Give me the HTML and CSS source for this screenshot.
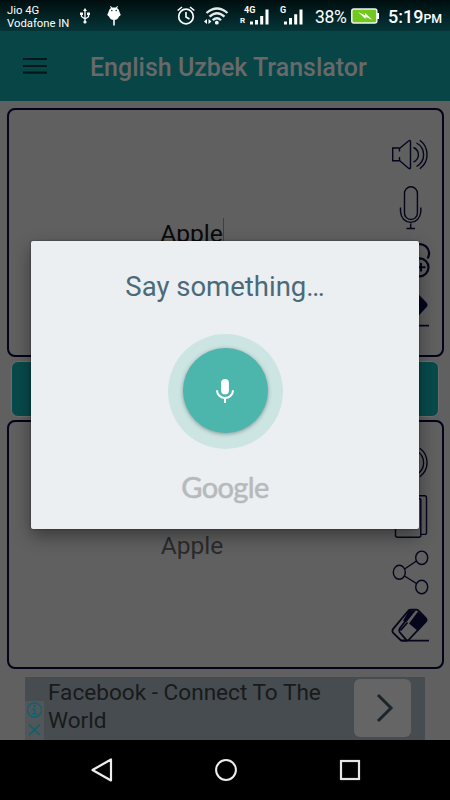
FILE: index.html
```
<!DOCTYPE html>
<html lang="en">
<head>
    <meta charset="UTF-8">
    <meta name="viewport" content="width=device-width, initial-scale=1.0">
    <title>English Uzbek Translator</title>
    <link rel="stylesheet" href="styles.css">
</head>
<body>

<!-- shared icons -->
<svg class="icon-defs" width="0" height="0">
    <symbol id="icon-speaker" viewBox="0 0 40 44">
        <path d="M8.500 15H1.700v12.700h6.800M8.500 14.500v4M8.500 24v4M8.500 15.500 17.500 8q2-1.200 2 .6v26q0 1.800-2 .6L8.500 27.500M22.500 14.500a8.500 8 0 0 1 0 14.500M25.500 10a14 13.500 0 0 1 0 23.500M28.800 7.200a18.500 18 0 0 1 0 28.600"/>
    </symbol>
    <symbol id="icon-eraser" viewBox="0 0 40 44">
        <path d="M17.500 7.500 2.200 25.800Q.7 28 2.200 29.800L9.500 37Q10.300 37.700 11.500 37.700H15.500Q17 37.700 18 36.500L34.800 18.700Q36.300 17 34.800 15.200L27.500 7.700Q26.500 6.700 25 6.700H20Q18.500 6.700 17.500 7.500Z" stroke-width="1.800"/>
        <path class="solid" d="M18 7.200h7L15.500 19l-3.500-1.300zM27 8.500l8.300 7.700v2.500L27 28l-9-7.500z"/>
        <path d="M14.500 18 8.700 25.500q-1.300 2 0 3.800l7 8M16.500 19.500l-7 8M10.500 37.700H38" stroke-width="1.800"/>
    </symbol>
</svg>

<div class="screen">
    <div class="status-bar">
        <div class="carrier">Jio 4G<br>Vodafone IN</div>
        <svg class="usb" width="10" height="16" viewBox="0 0 10 16">
            <path d="M5 2v12M1.500 5v3.500L5 11l3.500-2.300V5" fill="none" stroke="#fff" stroke-width="1.300"/>
            <path d="M5 0l2 3H3zM0 4.500h3v2.500H0zM7 4.500h3v2.500H7z" fill="#fff"/>
            <circle cx="5" cy="14" r="1.600" fill="#fff"/>
        </svg>
        <svg class="droid" width="14" height="20" viewBox="0 0 14 20">
            <path d="M1.500 6Q2 3 4 2L3 .5 3.800 0l1.200 1.500h4L10.200 0l.8.500L10 2q2 1 2.500 4l1.300 3-1.800 1.500q-1.300 3.500-5 3.500t-5-3.500L.2 9z" fill="#fff"/>
            <path d="M7 14v5.500" stroke="#fff" stroke-width="1.600"/>
            <circle cx="4.800" cy="4.500" r=".8" fill="#053033"/>
            <circle cx="9.200" cy="4.500" r=".8" fill="#053033"/>
        </svg>
        <svg class="alarm" width="18" height="19" viewBox="0 0 18 19">
            <circle cx="9" cy="10.500" r="7.300" fill="none" stroke="#fff" stroke-width="1.700"/>
            <path d="M9 6v5l3.500 2M.7 4.500 5 1M17.300 4.500 13 1" fill="none" stroke="#fff" stroke-width="1.600"/>
        </svg>
        <svg class="wifi" width="25" height="18" viewBox="0 0 25 18">
            <path d="M2.500 6q10.500-9 21 0M5.500 9.700q7.500-7 15 0M8.700 13.200q4.300-4 8.300 0" fill="none" stroke="#e4eaea" stroke-width="2.300"/>
            <circle cx="12.800" cy="15.700" r="1.900" fill="#fff"/>
            <path d="M0 14.500 3 12v5zM7.500 14.500 4.500 12v5z" fill="#fff"/>
        </svg>
        <div class="signal sim-one">
            <span class="net">4G</span>
            <span class="roam">R</span>
            <svg width="19" height="16" viewBox="0 0 19 16"><path d="M1.500 15.500v-3M6.500 15.500V11M11.700 15.500V7M17 15.500V.5" stroke="#fff" stroke-width="3"/></svg>
        </div>
        <div class="signal sim-two">
            <span class="net">G</span>
            <svg width="19" height="16" viewBox="0 0 19 16"><path d="M1.500 15.500v-3M6.500 15.500V9M11.700 15.500V5.200M17 15.500V.5" stroke="#fff" stroke-width="3"/></svg>
        </div>
        <span class="percent">38%</span>
        <svg class="battery" width="28" height="16" viewBox="0 0 28 16">
            <rect x=".8" y="1" width="25" height="14" rx="2" fill="#72c91d" stroke="#f2f2f2" stroke-width="1.500"/>
            <path d="M27 5v6" stroke="#fff" stroke-width="2"/>
            <path d="M7 4l7 3.200V5l7 6.500-6.500-2.500V11z" fill="#fff"/>
        </svg>
        <span class="clock">5:19<small>PM</small></span>
    </div>

    <header class="app-bar">
        <svg class="menu" width="24" height="18" viewBox="0 0 24 18"><path d="M0 2h24M0 9h24M0 15.700h24" stroke="#04191c" stroke-width="2.200"/></svg>
        <h1 class="title">English Uzbek Translator</h1>
    </header>

    <main class="content">
        <section class="panel source">
            <div class="field">Apple<span class="caret"></span></div>
            <div class="tools">
                <svg><use href="#icon-speaker"/></svg>
                <svg viewBox="0 0 40 44">
                    <rect x="13.500" y=".8" width="12.900" height="32.700" rx="6.400"/>
                    <path d="M9.500 21.500V26a10.200 11.500 0 0 0 20.300 0V21.500M19.700 37.500v5M15.500 42.500h8.500"/>
                </svg>
                <svg viewBox="0 0 40 44" class="bold">
                    <path d="M36.500 19.500A9.300 9.300 0 1 0 21 19.500"/>
                    <circle cx="28.500" cy="28.300" r="9"/>
                    <path d="M25.500 28.300h9M30 24v8.500" stroke-width="2"/>
                </svg>
                <svg viewBox="0 4 40 44"><use href="#icon-eraser" width="40" height="44"/></svg>
            </div>
        </section>

        <div class="translate-button"></div>

        <section class="panel result">
            <div class="field">Apple</div>
            <div class="tools">
                <svg><use href="#icon-speaker"/></svg>
                <svg viewBox="0 0 40 44">
                    <rect x="4.500" y="3.500" width="25.300" height="38.800" rx="2"/>
                    <path d="M10 3.500V.700H33.500q2 0 2 2v35q0 1.700-2 1.700H30"/>
                </svg>
                <svg viewBox="0 0 40 44">
                    <ellipse cx="8.300" cy="23.300" rx="6" ry="7"/>
                    <ellipse cx="30.700" cy="8.800" rx="6" ry="6.700"/>
                    <ellipse cx="30.700" cy="38" rx="6" ry="6.700"/>
                    <path d="M13.500 20 25.500 12M13.500 27 25.500 34.500"/>
                </svg>
                <svg><use href="#icon-eraser"/></svg>
            </div>
        </section>

        <div class="ad">
            <div class="ad-marks">
                <svg width="19" height="18" viewBox="0 0 19 18">
                    <circle cx="9.500" cy="9" r="7" fill="none" stroke="#0d6170" stroke-width="1.300"/>
                    <path d="M9.700 7.500v5.500M7.500 8h2M7.500 13h4.500M9.700 4v2" stroke="#0d6170" stroke-width="1.500"/>
                </svg>
                <svg width="19" height="20" viewBox="0 0 19 20"><path d="M4 5.500 15 16M15 5.500 4 16" stroke="#0d6170" stroke-width="1.600"/></svg>
            </div>
            <p class="ad-text">Facebook - Connect To The World</p>
            <div class="ad-arrow">
                <svg width="18" height="30" viewBox="0 0 18 30"><path d="M2 2 15 15 2 28" fill="none" stroke="#1b262c" stroke-width="3"/></svg>
            </div>
        </div>
    </main>

    <div class="nav-bar">
        <svg width="24" height="26" viewBox="0 0 24 26"><path d="M2.500 13 21 2.500v21z" fill="none" stroke="#eee" stroke-width="2.200" stroke-linejoin="round"/></svg>
        <svg width="24" height="24" viewBox="0 0 24 24"><circle cx="12" cy="12" r="9.900" fill="none" stroke="#eee" stroke-width="2"/></svg>
        <svg width="24" height="24" viewBox="0 0 24 24"><rect x="3" y="3" width="18" height="18" fill="none" stroke="#e6e6e6" stroke-width="2.200"/></svg>
    </div>

    <div class="dialog-layer">
        <div class="dialog">
            <div class="prompt">Say something…</div>
            <div class="halo">
                <div class="mic-button">
                    <svg width="18" height="24" viewBox="0 0 18 24">
                        <rect x="5.100" y="0" width="7.800" height="15.300" rx="3.900" fill="#fff"/>
                        <path d="M1 11.300a8 7.700 0 0 0 16 0M9 19v5" fill="none" stroke="#fff" stroke-width="2"/>
                    </svg>
                </div>
            </div>
            <div class="brand">Google</div>
        </div>
    </div>
</div>

</body>
</html>
```
FILE: styles.css
```
* {
    box-sizing: border-box;
}

body {
    margin: 0;
    font-family: Roboto, sans-serif;
    background-color: #606060;
}

svg {
    display: block;
    flex-shrink: 0;
}

.icon-defs {
    position: absolute;
}

.screen {
    position: relative;
    width: 450px;
    height: 800px;
    display: flex;
    flex-direction: column;
    overflow: hidden;
    background-color: #606060;
}

/* status bar */
.status-bar {
    height: 31px;
    display: flex;
    align-items: center;
    padding-left: 7px;
    background: linear-gradient(#000e0f, #053538);
    color: #fff;
    white-space: nowrap;
}

.carrier {
    width: 73px;
    font-size: 11.3px;
    line-height: 13px;
    padding-top: 2px;
}

.droid {
    margin-left: 17px;
    margin-top: 1px;
}

.alarm {
    margin-left: 56px;
}

.wifi {
    margin-left: 9px;
}

.signal {
    display: grid;
    align-items: end;
    font-size: 9px;
    font-weight: 700;
    line-height: 8px;
}

.signal .net,
.signal .roam,
.signal svg {
    grid-row: 1;
    grid-column: 1;
}

.signal .net {
    align-self: start;
}

.signal svg {
    justify-self: end;
}

.sim-one {
    width: 29px;
    height: 19px;
    margin-left: 11px;
}

.sim-one .net {
    padding-left: 4px;
}

.sim-one .roam {
    font-size: 8px;
}

.sim-two {
    width: 23px;
    height: 19px;
    margin-left: 11px;
}

.percent {
    width: 36px;
    margin-left: 12px;
    font-size: 17.5px;
    letter-spacing: -0.3px;
    padding-top: 2px;
}

.clock {
    margin-left: 9px;
    font-size: 18px;
    font-weight: 500;
    padding-top: 2px;
}

.clock small {
    font-size: 12.3px;
}

/* app bar */
.app-bar {
    height: 70px;
    display: flex;
    align-items: center;
    padding-left: 23px;
    background-color: #084547;
}

.title {
    margin: 0 0 0 43px;
    padding-top: 4px;
    font-size: 25px;
    font-weight: 500;
    line-height: 30px;
    color: #696969;
    white-space: nowrap;
}

/* translation panels */
.content {
    height: 639px;
    padding: 7px 7px 0;
}

.panel {
    height: 249px;
    width: 437px;
    display: flex;
    border: 2.5px solid #03031b;
    border-radius: 8px;
}

.field {
    width: 366px;
    display: flex;
    align-items: center;
    justify-content: center;
    padding-top: 3px;
    font-size: 24.6px;
    line-height: 30px;
    color: #0a0a0a;
}

.result .field {
    color: #2b2b2b;
}

.caret {
    width: 1px;
    height: 32px;
    background-color: #0d5557;
}

.tools {
    display: flex;
    flex-direction: column;
    gap: 9px;
    padding: 23px 0 0 16px;
}

.result .tools {
    gap: 10px;
    padding-top: 19px;
}

.tools svg {
    width: 40px;
    height: 44px;
    overflow: visible;
    fill: none;
    stroke: #05051c;
    stroke-width: 1.4;
}

.tools .bold {
    stroke-width: 2.2;
}

.solid {
    fill: #05051c;
    stroke: none;
}

.translate-button {
    height: 56px;
    margin: 4px 4px 3px;
    border: 1px solid #6d6d6d;
    border-radius: 7px;
    background-color: #084a4b;
}

/* ad banner */
.ad {
    width: 400px;
    height: 63px;
    margin: 8px auto 0;
    display: flex;
    background-color: #464c50;
}

.ad-marks {
    width: 19px;
    margin-top: 24px;
    background-color: #515658;
}

.ad-text {
    width: 310px;
    margin: 2px 0 0 4px;
    font-size: 22.6px;
    line-height: 27.5px;
    color: #181a1b;
}

.ad-arrow {
    width: 57px;
    height: 58px;
    margin: 2px 0 0 -4px;
    display: flex;
    align-items: center;
    justify-content: center;
    padding-left: 4px;
    border-radius: 6px;
    background-color: #656565;
}

/* navigation bar */
.nav-bar {
    height: 60px;
    display: flex;
    align-items: center;
    justify-content: center;
    gap: 100px;
    padding-left: 1px;
    background-color: #000;
}

/* voice dialog */
.dialog-layer {
    position: absolute;
    top: 31px;
    right: 0;
    bottom: 61px;
    left: 0;
    display: flex;
    align-items: center;
    justify-content: center;
}

.dialog {
    width: 388px;
    height: 288px;
    display: flex;
    flex-direction: column;
    align-items: center;
    border-radius: 2px;
    background-color: #ebeff2;
    box-shadow: 0 7px 18px rgba(0, 0, 0, 0.4), 0 0 2px rgba(0, 0, 0, 0.5);
}

.prompt {
    margin-top: 29px;
    font-size: 27.5px;
    line-height: 34px;
    color: #4b6a79;
}

.halo {
    width: 115px;
    height: 115px;
    margin-top: 30px;
    display: flex;
    align-items: center;
    justify-content: center;
    border-radius: 50%;
    background-color: #cce5e3;
}

.mic-button {
    width: 85px;
    height: 85px;
    margin-bottom: 2px;
    display: flex;
    align-items: center;
    justify-content: center;
    border-radius: 50%;
    background-color: #4db6ac;
    box-shadow: 0 1px 4px rgba(0, 0, 0, 0.35);
}

.brand {
    margin-top: 20px;
    font-family: Lato, sans-serif;
    font-size: 29px;
    line-height: 36px;
    letter-spacing: -0.6px;
    color: #b7babc;
    -webkit-text-stroke: 0.6px #b7babc;
}
```
